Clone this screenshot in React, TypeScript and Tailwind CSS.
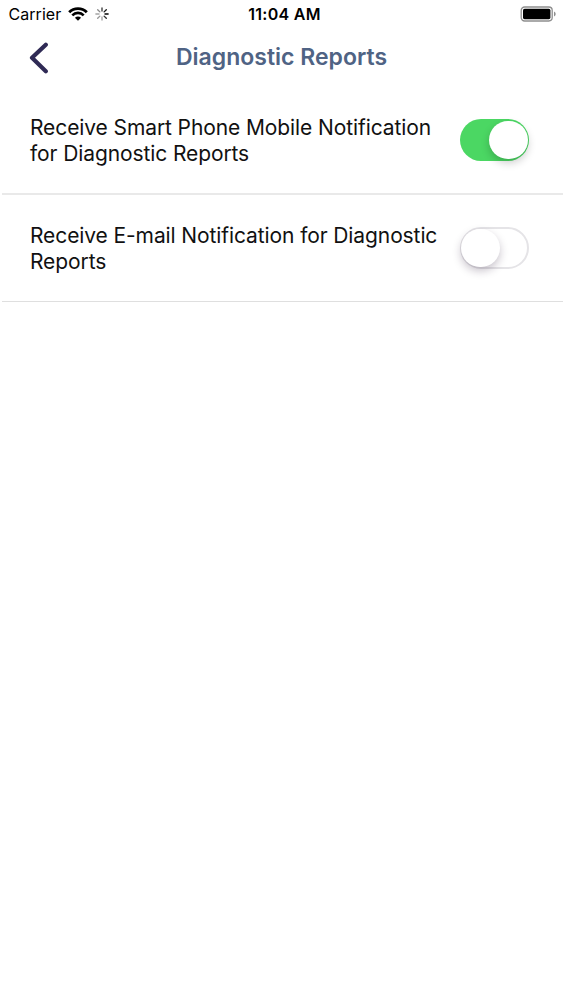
import { useState } from 'react';

interface Setting {
  id: string;
  lines: string[];
  enabled: boolean;
}

const spokes = [
  { angle: 0, opacity: 0.75 },
  { angle: 45, opacity: 0.9 },
  { angle: 90, opacity: 1 },
  { angle: 135, opacity: 0.8 },
  { angle: 180, opacity: 0.35 },
  { angle: 225, opacity: 0.4 },
  { angle: 270, opacity: 0.35 },
  { angle: 315, opacity: 0.45 },
];

function StatusBar() {
  return (
    <div className="relative flex h-7 items-center justify-between pr-[7px] pl-[8.5px] text-black">
      <div className="flex items-center">
        <span className="w-[53.5px] text-[16px] leading-7 tracking-[0.05px] whitespace-nowrap">Carrier</span>
        <svg className="ml-1.5" width="20" height="14" viewBox="0 0 20 14" fill="none" stroke="currentColor">
          <path d="M1.2 5.2C6 .4 14 .4 18.8 5.2" strokeWidth="2.9" />
          <path d="M4.3 8.3C7.4 5.1 12.6 5.1 15.7 8.3" strokeWidth="2.6" />
          <path d="M10 13.8 6.9 10.8Q10 8.2 13.1 10.8Z" fill="currentColor" stroke="none" />
        </svg>
        <svg className="ml-[7px]" width="14" height="14" viewBox="0 0 14 14" stroke="currentColor">
          {spokes.map((spoke) => (
            <path
              key={spoke.angle}
              d="M7 .9V4"
              strokeWidth="1.4"
              strokeLinecap="round"
              opacity={spoke.opacity}
              transform={`rotate(${spoke.angle} 7 7)`}
            />
          ))}
        </svg>
      </div>
      <span className="absolute inset-x-0 pl-[6px] text-center text-[16px] leading-7 font-semibold tracking-[0.3px]">
        11:04 AM
      </span>
      <svg width="36" height="16" viewBox="0 0 36 16">
        <rect x="1.2" y="1" width="31" height="14" rx="3.4" fill="none" stroke="#8e8e8e" strokeWidth="1.3" />
        <rect x="3" y="2.8" width="27.4" height="10.4" rx="1.6" fill="#000" />
        <path d="M34 5.5Q35.7 6.2 35.7 8T34 10.5Z" fill="#8e8e8e" />
      </svg>
    </div>
  );
}

function Toggle({ checked, onChange }: { checked: boolean; onChange: () => void }) {
  return (
    <button
      role="switch"
      aria-checked={checked}
      onClick={onChange}
      className={`flex h-[42px] w-[69px] shrink-0 items-center rounded-full ${
        checked ? 'justify-end bg-[#4bd763] pr-[1.5px]' : 'justify-start border-2 border-[#e5e4e7] bg-white'
      }`}
    >
      <span
        className={`shrink-0 rounded-full bg-white ${
          checked
            ? 'size-[38.5px] shadow-[0_4px_9px_rgba(0,0,0,0.2)]'
            : '-ml-px size-[38.5px] shadow-[0_4px_9px_rgba(40,20,50,0.25)]'
        }`}
      />
    </button>
  );
}

export default function App() {
  const [settings, setSettings] = useState<Setting[]>([
    { id: 'push', lines: ['Receive Smart Phone Mobile Notification', 'for Diagnostic Reports'], enabled: true },
    { id: 'email', lines: ['Receive E-mail Notification for Diagnostic', 'Reports'], enabled: false },
  ]);

  const toggleSetting = (id: string) => {
    setSettings(settings.map((s) => (s.id === id ? { ...s, enabled: !s.enabled } : s)));
  };

  return (
    <div className="h-screen overflow-hidden bg-white font-[Inter,sans-serif]">
      <StatusBar />

      <header className="grid h-[59px] grid-cols-[60px_1fr_60px] items-center">
        <button aria-label="Back" className="pl-[29px] text-[#2f2a55]">
          <svg width="20" height="32" viewBox="0 0 20 32" fill="none" stroke="currentColor" strokeWidth="4.2" strokeLinecap="round" strokeLinejoin="round">
            <path d="M16.8 2.7 3 15.8 16.8 29.2" />
          </svg>
        </button>
        <h1 className="text-center text-[23px] font-semibold whitespace-nowrap text-[#4f6384]">Diagnostic Reports</h1>
      </header>

      <ul className="ml-0.5">
        {settings.map((setting) => (
          <li
            key={setting.id}
            className={`flex items-center justify-between pr-[34px] pl-7 ${
              setting.enabled ? 'h-[108px] border-b-2 border-[#e9e9e9]' : 'h-[107px] border-b border-[#dfdfdf]'
            }`}
          >
            <p className="pt-px text-[21px] leading-[26px] tracking-[-0.1px] whitespace-nowrap text-[#111]">
              {setting.lines.map((line) => (
                <span key={line} className="block">
                  {line}
                </span>
              ))}
            </p>
            <Toggle checked={setting.enabled} onChange={() => toggleSetting(setting.id)} />
          </li>
        ))}
      </ul>
    </div>
  );
}
